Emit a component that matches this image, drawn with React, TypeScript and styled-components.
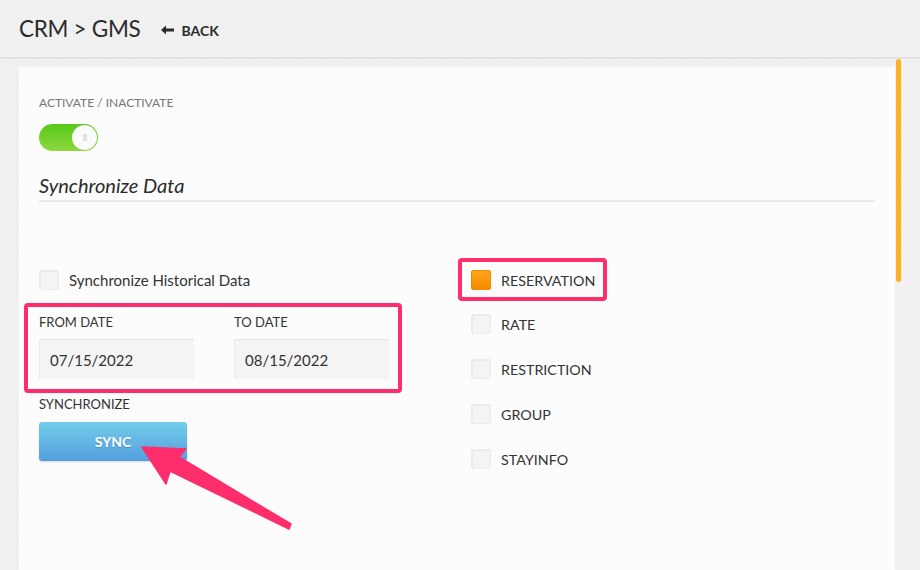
import React, { useState } from 'react';
import styled, { createGlobalStyle } from 'styled-components';

const GlobalStyle = createGlobalStyle`
  html, body {
    margin: 0;
    padding: 0;
    background: #f1f1f1;
    font-family: Lato, "Open Sans", sans-serif;
    color: #333;
  }
  * { box-sizing: border-box; }
`;

const Page = styled.div`
  width: 920px;
  height: 570px;
  overflow: hidden;
  background-color: #f1f1f1;
  background-image: radial-gradient(rgba(0, 0, 0, 0.025) 1px, transparent 1px);
  background-size: 3px 3px;
`;

const Header = styled.div`
  height: 57px;
  display: flex;
  align-items: center;
  padding: 0 19px;
  gap: 21px;
`;

const Title = styled.h1`
  margin: 0;
  font-size: 22.5px;
  font-weight: 400;
  color: #2b2b2b;
  letter-spacing: -0.3px;
`;

const BackLink = styled.a`
  display: flex;
  align-items: center;
  gap: 7px;
  font-size: 14px;
  font-weight: 700;
  color: #2b2b2b;
  text-decoration: none;
  margin-top: 3px;
`;

const Main = styled.div`
  position: relative;
  border-top: 2px solid #e2e2e2;
  padding: 8px 25px 0 19px;
  height: 513px;
`;

const ScrollThumb = styled.div`
  position: absolute;
  top: 0;
  left: 896px;
  width: 5px;
  height: 223px;
  border-radius: 3px;
  background: #fdb022;
`;

const Card = styled.div`
  position: relative;
  background: #fcfcfc;
  height: 100%;
  padding: 28px 20px 0 20px;
`;

const SmallLabel = styled.div<{ $muted?: boolean }>`
  font-size: ${p => (p.$muted ? '12px' : '13px')};
  line-height: 16px;
  color: ${p => (p.$muted ? '#777' : '#333')};
  text-transform: uppercase;
`;

const Toggle = styled.button<{ $on: boolean }>`
  display: block;
  position: relative;
  width: 59px;
  height: 27px;
  margin-top: 13px;
  border: none;
  border-radius: 14px;
  padding: 0;
  cursor: pointer;
  background: ${p => (p.$on ? 'linear-gradient(#56c91a, #8fd83e)' : '#ccc')};
`;

const Knob = styled.span<{ $on: boolean }>`
  position: absolute;
  top: 1px;
  left: ${p => (p.$on ? '33px' : '1px')};
  width: 25px;
  height: 25px;
  border-radius: 50%;
  background: #fbfbfb;
  display: flex;
  align-items: center;
  justify-content: center;
  &::after {
    content: '';
    width: 4px;
    height: 7px;
    background: #e2e2e2;
  }
`;

const SectionTitle = styled.h2`
  margin: 22px 0 0 0;
  font-size: 20px;
  line-height: 24px;
  font-style: italic;
  font-weight: 400;
  color: #2b2b2b;
  padding-bottom: 3px;
  border-bottom: 2px solid #ebebeb;
`;

const Body = styled.div`
  display: flex;
  margin-top: 57px;
`;

const LeftColumn = styled.div`
  width: 419px;
  padding-top: 11px;
`;

const RightColumn = styled.div`
  display: flex;
  flex-direction: column;
  margin-top: -1px;
`;

const CheckRow = styled.label<{ $indent?: boolean; $caps?: boolean }>`
  display: flex;
  align-items: center;
  gap: 10px;
  height: 20px;
  font-size: ${p => (p.$caps ? '14.3px' : '15px')};
  color: #333;
  cursor: pointer;
  padding-left: ${p => (p.$indent ? '13px' : '0')};
`;

const Box = styled.span<{ $checked?: boolean }>`
  width: 20px;
  height: 20px;
  flex-shrink: 0;
  border-radius: 2px;
  background: ${p => (p.$checked ? 'linear-gradient(#ffa51c, #f88a00)' : '#f4f4f4')};
  border: 1px solid ${p => (p.$checked ? '#f28a00' : '#ececec')};
  box-shadow: ${p => (p.$checked ? 'none' : 'inset 1px 1px 1px rgba(0,0,0,0.04)')};
`;

const Highlight = styled.div`
  border: 4px solid #fe2d6c;
  border-radius: 4px;
`;

const DateBox = styled(Highlight)`
  margin: 13px 0 0 -15px;
  width: 378px;
  padding: 7px 8px 10px 11px;
  display: flex;
  gap: 40px;
`;

const ReserveBox = styled(Highlight)`
  padding: 8px 8px 7px 9px;
  margin-bottom: 13px;
`;

const Field = styled.div`
  display: flex;
  flex-direction: column;
  gap: 9px;
  width: 155px;
`;

const DateInput = styled.input`
  height: 40px;
  width: 100%;
  border: none;
  border-top: 1px solid #e4e4e4;
  border-left: 1px solid #ececec;
  background: #f4f4f4;
  padding: 0 10px;
  font-family: inherit;
  font-size: 15px;
  color: #333;
  outline: none;
`;

const SyncLabel = styled(SmallLabel)`
  margin-top: 3px;
`;

const SyncButton = styled.button`
  margin-top: 10px;
  width: 148px;
  height: 39px;
  border: none;
  border-radius: 3px;
  background: linear-gradient(#72cde8, #559ee0);
  box-shadow: 0 1px 2px rgba(0, 0, 0, 0.15);
  color: #fff;
  font-family: inherit;
  font-size: 14px;
  font-weight: 700;
  text-shadow: 0 1px 1px rgba(0, 0, 0, 0.2);
  cursor: pointer;
`;

const OptionList = styled.div`
  display: flex;
  flex-direction: column;
  gap: 25px;
`;

const Arrow = styled.svg`
  position: absolute;
  left: 0;
  top: 0;
  width: 300px;
  height: 480px;
  pointer-events: none;
`;

const options = ['RATE', 'RESTRICTION', 'GROUP', 'STAYINFO'];

// arrow outline in page coordinates, shifted into the card
const arrowPoints = [
  [142, 447], [186, 449], [179, 457], [291, 524], [289, 529], [170, 471], [166, 484],
].map(([x, y]) => `${x - 19},${y - 67}`).join(' ');

export default function App() {
  const [active, setActive] = useState(true);

  return (
    <Page>
      <GlobalStyle />
      <Header>
        <Title>CRM &gt; GMS</Title>
        <BackLink href="#">
          <svg width="13" height="10" viewBox="0 0 13 10">
            <path d="M0 5 L5 0.5 L5 3.6 L13 3.6 L13 6.4 L5 6.4 L5 9.5 Z" fill="#2b2b2b" />
          </svg>
          BACK
        </BackLink>
      </Header>
      <Main>
        <ScrollThumb />
        <Card>
          <SmallLabel $muted>Activate / Inactivate</SmallLabel>
          <Toggle $on={active} onClick={() => setActive(!active)}>
            <Knob $on={active} />
          </Toggle>
          <SectionTitle>Synchronize Data</SectionTitle>
          <Body>
            <LeftColumn>
              <CheckRow>
                <Box />
                Synchronize Historical Data
              </CheckRow>
              <DateBox>
                <Field>
                  <SmallLabel>From Date</SmallLabel>
                  <DateInput defaultValue="07/15/2022" />
                </Field>
                <Field>
                  <SmallLabel>To Date</SmallLabel>
                  <DateInput defaultValue="08/15/2022" />
                </Field>
              </DateBox>
              <SyncLabel>Synchronize</SyncLabel>
              <SyncButton>SYNC</SyncButton>
            </LeftColumn>
            <RightColumn>
              <ReserveBox>
                <CheckRow $caps>
                  <Box $checked />
                  RESERVATION
                </CheckRow>
              </ReserveBox>
              <OptionList>
                {options.map(o => (
                  <CheckRow key={o} $indent $caps>
                    <Box />
                    {o}
                  </CheckRow>
                ))}
              </OptionList>
            </RightColumn>
          </Body>
          <Arrow viewBox="0 0 300 480">
            <polygon points={arrowPoints} fill="#fe2d6c" stroke="#fe2d6c" strokeWidth="1.5" strokeLinejoin="round" />
          </Arrow>
        </Card>
      </Main>
    </Page>
  );
}
